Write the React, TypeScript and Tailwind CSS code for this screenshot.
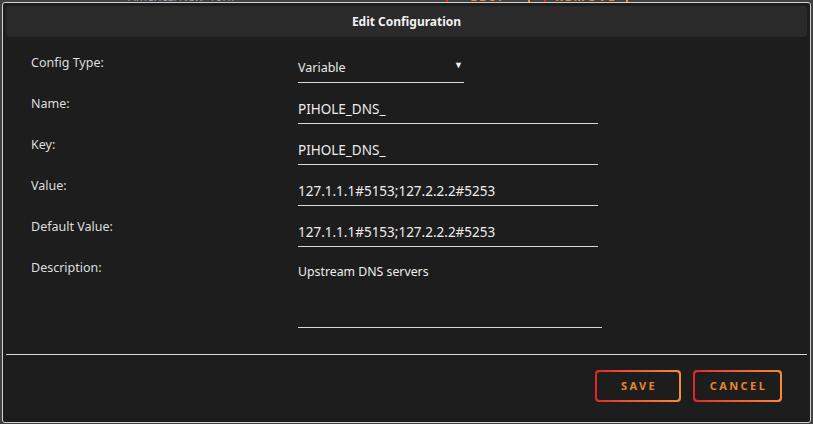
import React from 'react'

const FONT = "font-['Noto_Sans',sans-serif]"

const FIELDS = [
  { label: 'Name:', value: 'PIHOLE_DNS_' },
  { label: 'Key:', value: 'PIHOLE_DNS_' },
  { label: 'Value:', value: '127.1.1.1#5153;127.2.2.2#5253' },
  { label: 'Default Value:', value: '127.1.1.1#5153;127.2.2.2#5253' },
]

function GradientButton({ label, width }: { label: string; width: string }) {
  return (
    <div className={`${width} h-[32px] p-[2px] rounded-[4px] bg-gradient-to-r from-[#e0242a] to-[#fb8a34]`}>
      <div className="w-full h-full rounded-[3px] bg-[#1d1d1d] flex items-center justify-center">
        <span className="text-[11px] font-bold tracking-[2.4px] text-[#ec8430] pl-[2px]">{label}</span>
      </div>
    </div>
  )
}

export default function App() {
  return (
    <div className={`relative w-[813px] h-[424px] bg-[#414141] overflow-hidden ${FONT}`}>
      {/* page content behind the dialog, only a sliver shows */}
      <div className="absolute left-0 top-[-10px] w-full h-[14px] flex items-center text-[12px]">
        <span className="ml-[128px] text-[#8a9bb0]">America/New_York</span>
        <div className="ml-[212px] w-[84px] h-[14px] border-l-2 border-r-2 border-l-[#e0242a] border-r-[#fb8a34] flex items-center justify-center text-[#ec8430] font-bold tracking-[2px]">EDIT</div>
        <div className="ml-[14px] w-[84px] h-[14px] border-l-2 border-r-2 border-l-[#e0242a] border-r-[#fb8a34] flex items-center justify-center text-[#ec8430] font-bold tracking-[2px]">REMOVE</div>
      </div>

      {/* dialog */}
      <div className="absolute left-[2px] top-[2px] w-[809px] h-[421px] border border-[#d2d2d2] rounded-[3px] bg-[#1d1d1d] p-[3px] flex flex-col">
        <div className="h-[31px] shrink-0 rounded-[4px] bg-[#2a2a2a] flex items-center justify-center">
          <span className="text-[12px] font-bold text-[#f2f2f2]">Edit Configuration</span>
        </div>

        <div className="pt-[18px] pl-[25px] flex flex-col text-[12.5px] leading-[16px]">
          {/* config type */}
          <div className="h-[41px] flex">
            <div className="w-[267px] text-[#dedede]">Config Type:</div>
            <div className="w-[166px] pt-[5px] h-[28px] border-b border-[#d8d8d8] flex justify-between">
              <span className="text-[#e8e8e8]">Variable</span>
              <span className="text-[9px] leading-[12px] text-[#f2f2f2] mr-[1px] mt-[-1px]">▼</span>
            </div>
          </div>

          {FIELDS.map((f) => (
            <div key={f.label} className="h-[41px] flex">
              <div className="w-[267px] text-[#dedede]">{f.label}</div>
              <div className="w-[300px] pt-[5px] h-[28px] border-b border-[#d8d8d8] text-[13.5px] text-[#ededed]">
                {f.value}
              </div>
            </div>
          ))}

          {/* description */}
          <div className="flex">
            <div className="w-[267px] text-[#dedede]">Description:</div>
            <div className="w-[304px] pt-[4px] h-[68px] border-b border-[#d8d8d8] text-[12.3px] text-[#ededed]">
              Upstream DNS servers
            </div>
          </div>
        </div>

        <div className="mt-[26px] h-px bg-[#d8d8d8]" />

        <div className="pt-[15px] pr-[25px] flex justify-end gap-[12px]">
          <GradientButton label="SAVE" width="w-[86px]" />
          <GradientButton label="CANCEL" width="w-[89px]" />
        </div>
      </div>
    </div>
  )
}
